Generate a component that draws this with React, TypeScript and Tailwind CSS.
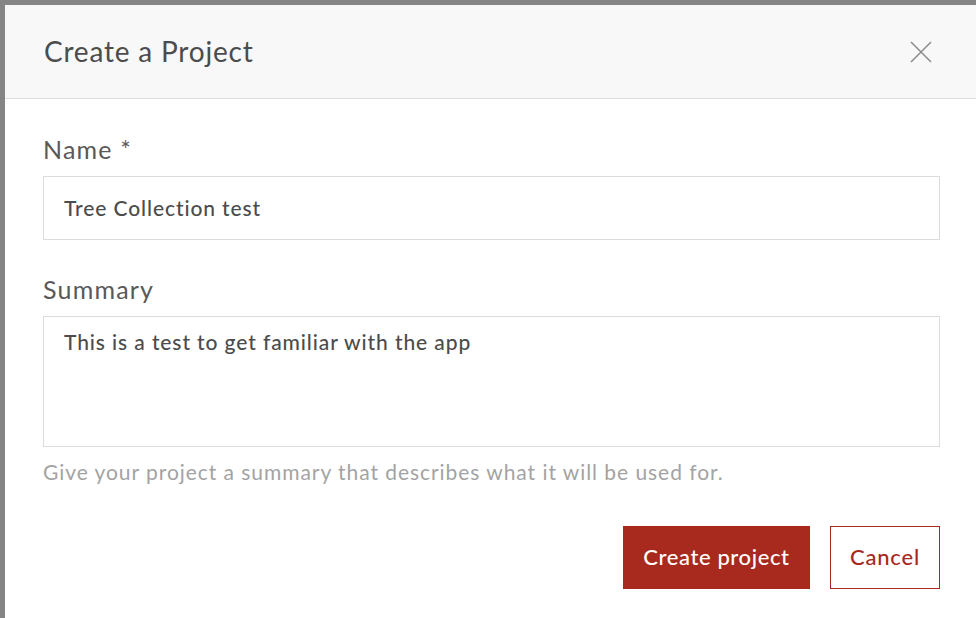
import { JSX } from "react";

const font = { fontFamily: "Lato, 'Open Sans', sans-serif" };

const CloseIcon = () => (
  <svg width="22" height="22" viewBox="0 0 22 22" className="text-[#8a8a8a]">
    <path d="M1 1 L21 21 M21 1 L1 21" stroke="currentColor" strokeWidth="1.5" fill="none" />
  </svg>
);

const App = (): JSX.Element => {
  return (
    <div className="w-[976px] h-[618px] overflow-hidden bg-[#858585] pt-[5px] pl-[5px]" style={font}>
      <div className="w-[973px] h-[613px] bg-white flex flex-col">
        {/* Header */}
        <div className="h-[94px] shrink-0 bg-[#f8f8f8] border-b border-[#dddddd] flex items-center justify-between pl-[39px] pr-[46px]">
          <h2 className="text-[28px] text-[#4c4c4c] font-normal tracking-[0.8px] -mt-[2px]">Create a Project</h2>
          <button className="cursor-pointer">
            <CloseIcon />
          </button>
        </div>

        {/* Body */}
        <div className="flex flex-col px-[38px] pt-[33px]">
          <label className="text-[25px] text-[#595959] leading-[34px] tracking-[1.2px]">Name *</label>
          <div className="mt-[10px] h-[64px] border border-[#dcdcdc] flex items-center px-[20px]">
            <span className="text-[21px] text-[#4c4c4c] font-medium tracking-[0.9px]">Tree Collection test</span>
          </div>

          <label className="mt-[32px] text-[25px] text-[#595959] leading-[34px] tracking-[1.2px]">Summary</label>
          <div className="mt-[10px] h-[131px] border border-[#dcdcdc] px-[20px] pt-[9px]">
            <span className="text-[21px] text-[#4c4c4c] font-medium tracking-[0.9px]">
              This is a test to get familiar with the app
            </span>
          </div>
          <p className="mt-[9px] text-[21px] text-[#a3a3a3] tracking-[0.95px]">
            Give your project a summary that describes what it will be used for.
          </p>

          <div className="mt-[38px] flex justify-end gap-[20px]">
            <button className="h-[63px] w-[187px] bg-[#a8291e] text-white text-[22px] font-medium tracking-[0.6px] pb-[2px]">
              Create project
            </button>
            <button className="h-[63px] w-[110px] border border-[#a8291e] bg-white text-[#a8291e] text-[22px] font-medium tracking-[0.8px] pb-[2px]">
              Cancel
            </button>
          </div>
        </div>
      </div>
    </div>
  );
};

export default App;
